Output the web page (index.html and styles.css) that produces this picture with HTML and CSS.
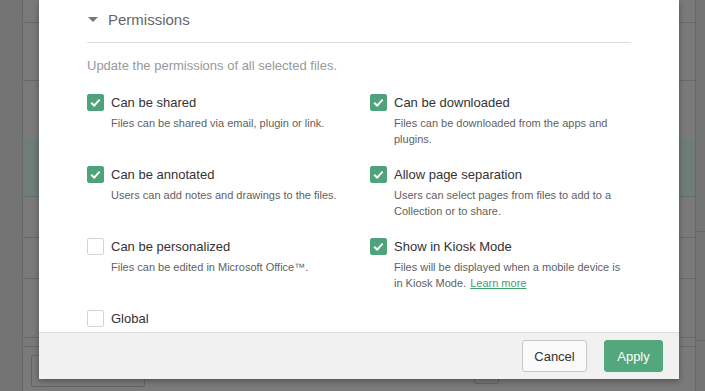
FILE: index.html
```html
<!DOCTYPE html>
<html>

<head>
    <link rel="stylesheet" href="styles.css">
</head>

<body>
    <div class="backdrop">
        <div class="gutter"></div>
        <div class="table">
            <div class="row row-top"></div>
            <div class="row row-tall"></div>
            <div class="row row-plain"></div>
            <div class="row row-tall selected"></div>
            <div class="row row-mid"></div>
            <div class="row row-mid"></div>
            <div class="row row-wide"></div>
            <div class="row row-thin"></div>
            <div class="row row-last">
                <div class="ghost-button"></div>
                <div class="ghost-small"></div>
            </div>
        </div>
        <div class="edge">
            <div class="edge-a"></div>
            <div class="edge-b"></div>
        </div>
    </div>

    <div class="modal">
        <div class="modal-body">
            <div class="section-title">
                <span class="caret"></span>
                <span>Permissions</span>
            </div>

            <p class="intro">Update the permissions of all selected files.</p>

            <div class="perm-grid">
                <div class="perm">
                    <label class="perm-label">
                        <span class="box checked">
                            <svg width="17" height="17" viewBox="0 0 17 17"><polyline points="4.2,8.8 7.2,11.6 12.6,5.6" fill="none" stroke="#fff" stroke-width="2"/></svg>
                        </span>
                        Can be shared
                    </label>
                    <div class="perm-desc">Files can be shared via email, plugin or link.</div>
                </div>
                <div class="perm">
                    <label class="perm-label">
                        <span class="box checked">
                            <svg width="17" height="17" viewBox="0 0 17 17"><polyline points="4.2,8.8 7.2,11.6 12.6,5.6" fill="none" stroke="#fff" stroke-width="2"/></svg>
                        </span>
                        Can be downloaded
                    </label>
                    <div class="perm-desc">Files can be downloaded from the apps and plugins.</div>
                </div>

                <div class="perm">
                    <label class="perm-label">
                        <span class="box checked">
                            <svg width="17" height="17" viewBox="0 0 17 17"><polyline points="4.2,8.8 7.2,11.6 12.6,5.6" fill="none" stroke="#fff" stroke-width="2"/></svg>
                        </span>
                        Can be annotated
                    </label>
                    <div class="perm-desc">Users can add notes and drawings to the files.</div>
                </div>
                <div class="perm">
                    <label class="perm-label">
                        <span class="box checked">
                            <svg width="17" height="17" viewBox="0 0 17 17"><polyline points="4.2,8.8 7.2,11.6 12.6,5.6" fill="none" stroke="#fff" stroke-width="2"/></svg>
                        </span>
                        Allow page separation
                    </label>
                    <div class="perm-desc">Users can select pages from files to add to a Collection or to share.</div>
                </div>

                <div class="perm">
                    <label class="perm-label">
                        <span class="box"></span>
                        Can be personalized
                    </label>
                    <div class="perm-desc">Files can be edited in Microsoft Office™.</div>
                </div>
                <div class="perm">
                    <label class="perm-label">
                        <span class="box checked">
                            <svg width="17" height="17" viewBox="0 0 17 17"><polyline points="4.2,8.8 7.2,11.6 12.6,5.6" fill="none" stroke="#fff" stroke-width="2"/></svg>
                        </span>
                        Show in Kiosk Mode
                    </label>
                    <div class="perm-desc"><span>Files will be displayed when a mobile device is in Kiosk Mode.</span><a href="#" class="learn">Learn more</a></div>
                </div>

                <div class="perm">
                    <label class="perm-label">
                        <span class="box"></span>
                        Global
                    </label>
                </div>
            </div>
        </div>

        <div class="modal-footer">
            <button class="btn btn-cancel">Cancel</button>
            <button class="btn btn-apply">Apply</button>
        </div>
    </div>
</body>

</html>
```

FILE: styles.css
```css
body {
    margin: 0;
    width: 705px;
    height: 391px;
    overflow: hidden;
    background-color: #747474;
    font-family: "Liberation Sans", Arial, sans-serif;
    position: relative;
}

/* page behind the modal (already dimmed) */
.backdrop {
    display: flex;
    height: 391px;
}

.gutter {
    width: 22px;
}

.table {
    width: 672px;
    border-left: 1px solid #686868;
    border-right: 1px solid #686868;
    background-color: #7a7a7a;
    display: flex;
    flex-direction: column;
}

.row {
    border-bottom: 1px solid #686868;
}

.row-top { height: 22px; }
.row-tall { height: 57px; }
.row-plain { height: 58px; border-bottom: none; }
.row-mid { height: 40px; }
.row-wide { height: 58px; }
.row-thin { height: 8px; }

.selected {
    background-color: #6e7d77;
}

.row-last {
    flex: 1;
    border-bottom: none;
    position: relative;
}

.ghost-button {
    margin: 8px 0 0 8px;
    width: 112px;
    height: 30px;
    border: 1px solid #646464;
    border-radius: 2px;
}

.ghost-small {
    position: absolute;
    left: 451px;
    top: 20px;
    width: 23px;
    height: 15px;
    border: 1px solid #646464;
    border-radius: 2px;
}

.edge {
    flex: 1;
    display: flex;
    flex-direction: column;
}

.edge-a {
    height: 231px;
    border-bottom: 1px solid #686868;
}

.edge-b {
    height: 108px;
    border-bottom: 1px solid #686868;
}

/* modal */
.modal {
    position: absolute;
    left: 39px;
    top: 0;
    width: 640px;
    height: 379px;
    background-color: #fff;
    box-shadow: 0 2px 6px rgba(0, 0, 0, 0.35);
    display: flex;
    flex-direction: column;
}

.modal-body {
    flex: 1;
    padding: 9px 48px 0 48px;
    overflow: hidden;
}

.section-title {
    display: flex;
    align-items: center;
    height: 20px;
    padding-bottom: 13px;
    border-bottom: 1px solid #dedede;
    font-size: 15px;
    color: #666;
}

.caret {
    width: 0;
    height: 0;
    margin: 0 10px 0 1px;
    border-left: 5px solid transparent;
    border-right: 5px solid transparent;
    border-top: 5px solid #777;
}

.intro {
    margin: 14px 0 17px 0;
    font-size: 13px;
    line-height: 18px;
    color: #999;
}

.perm-grid {
    display: grid;
    grid-template-columns: 261px 261px;
    column-gap: 22px;
    row-gap: 17px;
}

.perm-label {
    display: flex;
    align-items: center;
    height: 20px;
    font-size: 13px;
    color: #333;
}

.box {
    width: 15px;
    height: 15px;
    margin-right: 7px;
    border: 1px solid #d4d4d4;
    border-radius: 2px;
    background-color: #fff;
    display: flex;
    align-items: center;
    justify-content: center;
}

.box.checked {
    background-color: #4fa37a;
    border-color: #4fa37a;
}

.box svg {
    flex: none;
}

.perm-desc {
    margin: 3px 0 0 24px;
    padding-right: 10px;
    font-size: 11px;
    line-height: 16px;
    color: #5f5f5f;
}

.learn {
    margin-left: 4px;
    color: #3f9e6e;
}

.modal-footer {
    border-top: 1px solid #dcdcdc;
    background-color: #f1f1f1;
    display: flex;
    justify-content: flex-end;
    align-items: flex-start;
    gap: 17px;
    padding: 7px 16px 0 0;
    box-sizing: border-box;
    height: 47px;
}

.btn {
    height: 32px;
    font-family: "Liberation Sans", Arial, sans-serif;
    font-size: 13px;
    border-radius: 3px;
    cursor: pointer;
}

.btn-cancel {
    width: 65px;
    background-color: #fafafa;
    border: 1px solid #c8c8c8;
    color: #333;
}

.btn-apply {
    width: 59px;
    background-color: #52a77c;
    border: 1px solid #52a77c;
    color: #fff;
}
```
